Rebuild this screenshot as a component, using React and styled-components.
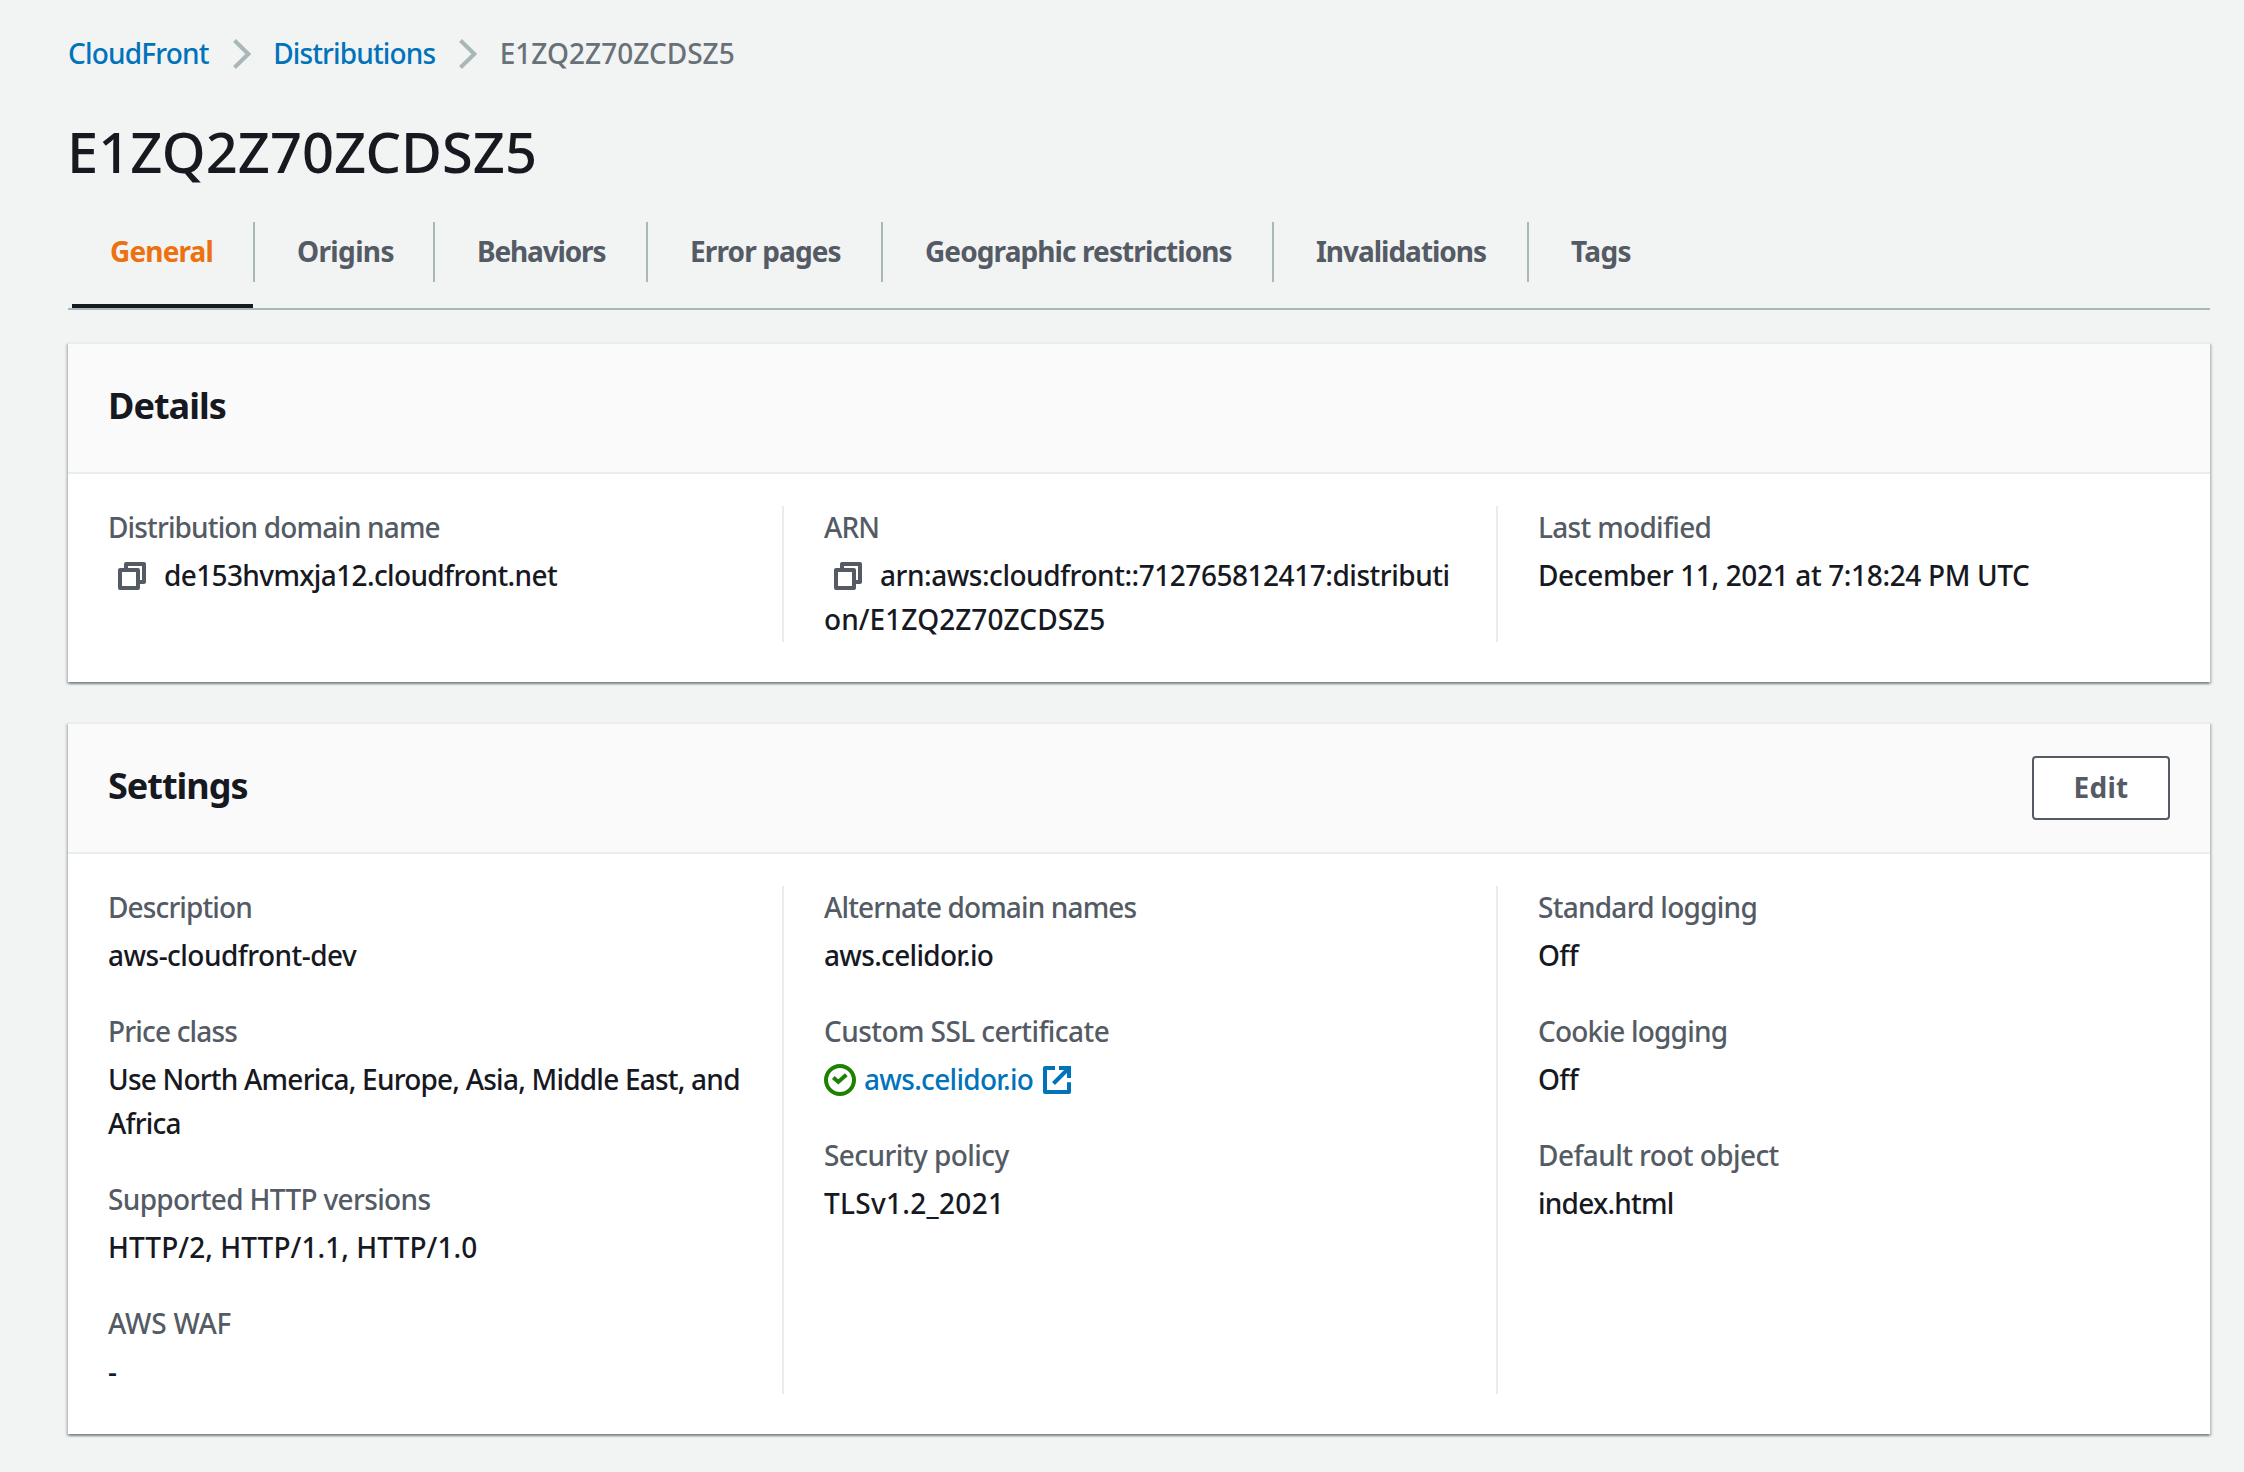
import React from "react";
import styled, { createGlobalStyle } from "styled-components";

const GlobalStyle = createGlobalStyle`
  * { box-sizing: border-box; }
  body {
    margin: 0;
    background: #f2f3f3;
    color: #16191f;
    font: 500 28px/44px "Noto Sans", "Open Sans", sans-serif;
  }
`;

const Page = styled.main`
  width: 2244px;
  height: 1472px;
  overflow: hidden;
  padding: 31px 34px 0 68px;
`;

const Text = styled.span`
  letter-spacing: ${(p) => p.$track ?? 0}px;
`;

const Breadcrumbs = styled.nav`
  display: flex;
  align-items: center;
  height: 44px;
  color: #687078;
`;

const Link = styled.a`
  color: #0073bb;
  text-decoration: none;
  letter-spacing: ${(p) => p.$track ?? 0}px;
`;

const ChevronIcon = styled.svg`
  width: 18px;
  height: 30px;
  margin: 2px 22.5px 0 24px;
  fill: none;
  stroke: #aab7b8;
  stroke-width: 4;
`;

const Title = styled.h1`
  margin: 38px 0 0 -1px;
  font-size: 56px;
  font-weight: 500;
  line-height: 76px;
  letter-spacing: 0;
`;

const TabList = styled.div`
  display: flex;
  margin-top: 33px;
  border-bottom: 2px solid #aab7b8;
`;

const Tab = styled.div`
  width: ${(p) => (p.$width ? `${p.$width}px` : "auto")};
  color: ${(p) => (p.$active ? "#ec7211" : "#545b64")};
`;

const TabLabel = styled.div`
  height: 60px;
  padding-left: 42px;
  border-right: ${(p) => (p.$last ? "none" : "2px solid #aab7b8")};
  font-weight: 700;
  line-height: 59px;
  white-space: nowrap;
`;

const TabMarker = styled.div`
  height: 4px;
  margin: 22px 2px 0 4px;
  background: ${(p) => (p.$active ? "#16191f" : "transparent")};
`;

const Card = styled.section`
  margin-top: ${(p) => p.$gap}px;
  border-top: 2px solid #eaeded;
  background: #fff;
  box-shadow:
    0 2px 2px 0 rgba(0, 28, 36, 0.3),
    2px 2px 2px 0 rgba(0, 28, 36, 0.15),
    -2px 2px 2px 0 rgba(0, 28, 36, 0.15);
`;

const CardHeader = styled.header`
  display: flex;
  align-items: center;
  justify-content: space-between;
  height: 130px;
  padding: 0 40px;
  border-bottom: 2px solid #eaeded;
  background: #fafafa;
`;

const CardTitle = styled.h2`
  margin: 0;
  padding-bottom: 4px;
  font-size: 36px;
  font-weight: 700;
  line-height: 50px;
  letter-spacing: ${(p) => p.$track}px;
`;

const Button = styled.button`
  width: 138px;
  height: 64px;
  padding: 0 0 2px;
  border: 2px solid #545b64;
  border-radius: 4px;
  background: #fff;
  color: #545b64;
  font: inherit;
  font-weight: 700;
  letter-spacing: 0.3px;
`;

const Columns = styled.div`
  display: grid;
  grid-template-columns: 714px 714px 1fr;
  padding: 32px 0 40px;
`;

const Column = styled.div`
  display: flex;
  flex-direction: column;
  gap: 33px;
  padding: 0 38px 1px 40px;
  border-left: 2px solid #eaeded;

  &:first-child {
    border-left: none;
  }
`;

const Field = styled.div`
  display: flex;
  flex-direction: column;
  gap: 4px;
  margin-top: -1px;
`;

const Label = styled.div`
  color: #545b64;
  letter-spacing: ${(p) => p.$track ?? 0}px;
`;

const Value = styled.div`
  color: #16191f;
  letter-spacing: ${(p) => p.$track ?? 0}px;
  word-break: ${(p) => (p.$breakAll ? "break-all" : "normal")};
`;

const CopySvg = styled.svg`
  width: 28px;
  height: 28px;
  margin: 0 18px 0 10px;
  vertical-align: -4px;
  fill: none;
  stroke: #545b64;
  stroke-width: 4;
  stroke-linejoin: round;
`;

const StatusSvg = styled.svg`
  width: 32px;
  height: 32px;
  margin-right: 8px;
  vertical-align: -6px;
  fill: none;
  stroke: #1d8102;
  stroke-width: 4;
`;

const ExternalSvg = styled.svg`
  width: 28px;
  height: 28px;
  margin-left: 10px;
  vertical-align: -4px;
  fill: none;
  stroke: #0073bb;
  stroke-width: 4;
`;

const Chevron = () => (
  <ChevronIcon viewBox="0 0 18 30">
    <path d="M1.5 1.5L15.3 15L1.5 28.5" />
  </ChevronIcon>
);

const CopyIcon = () => (
  <CopySvg viewBox="0 0 28 28">
    <rect x="2" y="8" width="18" height="18" />
    <path d="M8 6V2H26V20H22" />
  </CopySvg>
);

const SuccessIcon = () => (
  <StatusSvg viewBox="0 0 32 32">
    <circle cx="16" cy="16" r="14" />
    <path d="M9.3 13.5L14.3 17.9L22.3 10.7" />
  </StatusSvg>
);

const ExternalIcon = () => (
  <ExternalSvg viewBox="0 0 28 28">
    <path d="M12 2H2V26H26V16.3" strokeLinejoin="round" />
    <path d="M16 2H26V12" />
    <path d="M25.5 2.5L10.5 17.5" />
  </ExternalSvg>
);

const tabs = [
  { label: "General", width: 187, track: -0.85, active: true },
  { label: "Origins", width: 180, track: -0.65 },
  { label: "Behaviors", width: 213, track: -1.15 },
  { label: "Error pages", width: 235, track: -0.88 },
  { label: "Geographic restrictions", width: 391, track: -0.9 },
  { label: "Invalidations", width: 255, track: -1.02 },
  { label: "Tags", track: -0.6 },
];

const settings = [
  [
    { label: "Description", lt: -0.88, value: "aws-cloudfront-dev", vt: -0.53 },
    {
      label: "Price class",
      lt: -0.82,
      value: "Use North America, Europe, Asia, Middle East, and Africa",
      vt: -0.78,
    },
    {
      label: "Supported HTTP versions",
      lt: -0.66,
      value: "HTTP/2, HTTP/1.1, HTTP/1.0",
      vt: 0.06,
    },
    { label: "AWS WAF", lt: -0.2, value: "-", vt: 0 },
  ],
  [
    { label: "Alternate domain names", lt: -0.87, value: "aws.celidor.io", vt: -0.69 },
    {
      label: "Custom SSL certificate",
      lt: -0.57,
      value: (
        <>
          <SuccessIcon />
          <Link $track={-0.69}>
            aws.celidor.io
            <ExternalIcon />
          </Link>
        </>
      ),
    },
    { label: "Security policy", lt: -0.56, value: "TLSv1.2_2021", vt: 0.3 },
  ],
  [
    { label: "Standard logging", lt: -0.74, value: "Off", vt: -0.6 },
    { label: "Cookie logging", lt: -0.8, value: "Off", vt: -0.6 },
    { label: "Default root object", lt: -0.58, value: "index.html", vt: -0.75 },
  ],
];

const details = [
  [
    {
      label: "Distribution domain name",
      lt: -0.86,
      value: (
        <>
          <CopyIcon />
          <Text $track={-0.63}>de153hvmxja12.cloudfront.net</Text>
        </>
      ),
    },
  ],
  [
    {
      label: "ARN",
      lt: -0.9,
      breakAll: true,
      value: (
        <>
          <CopyIcon />
          <Text $track={-0.47}>arn:aws:cloudfront::712765812417:distributi</Text>
          <Text $track={0.05}>on/E1ZQ2Z70ZCDSZ5</Text>
        </>
      ),
    },
  ],
  [
    {
      label: "Last modified",
      lt: -0.68,
      value: "December 11, 2021 at 7:18:24 PM UTC",
      vt: -0.36,
    },
  ],
];

const FieldColumns = ({ columns }) => (
  <Columns>
    {columns.map((fields, i) => (
      <Column key={i}>
        {fields.map((f) => (
          <Field key={f.label}>
            <Label $track={f.lt}>{f.label}</Label>
            <Value $track={f.vt} $breakAll={f.breakAll}>
              {f.value}
            </Value>
          </Field>
        ))}
      </Column>
    ))}
  </Columns>
);

export default function App() {
  return (
    <>
      <GlobalStyle />
      <Page>
        <Breadcrumbs>
          <Link $track={-0.82}>CloudFront</Link>
          <Chevron />
          <Link $track={-0.86}>Distributions</Link>
          <Chevron />
          <Text $track={0}>E1ZQ2Z70ZCDSZ5</Text>
        </Breadcrumbs>
        <Title>E1ZQ2Z70ZCDSZ5</Title>
        <TabList>
          {tabs.map((t, i) => (
            <Tab key={t.label} $width={t.width} $active={t.active}>
              <TabLabel $last={i === tabs.length - 1}>
                <Text $track={t.track}>{t.label}</Text>
              </TabLabel>
              <TabMarker $active={t.active} />
            </Tab>
          ))}
        </TabList>
        <Card $gap={32}>
          <CardHeader>
            <CardTitle $track={-0.95}>Details</CardTitle>
          </CardHeader>
          <FieldColumns columns={details} />
        </Card>
        <Card $gap={40}>
          <CardHeader>
            <CardTitle $track={-1}>Settings</CardTitle>
            <Button>Edit</Button>
          </CardHeader>
          <FieldColumns columns={settings} />
        </Card>
      </Page>
    </>
  );
}
